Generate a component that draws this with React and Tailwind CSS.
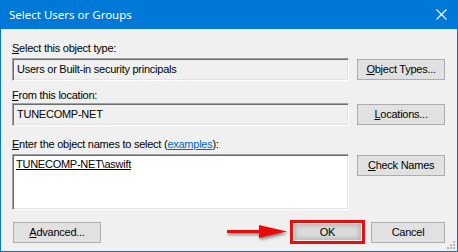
const Btn = ({ children, className = "" }) => (
    <div
        className={
            "h-[21px] flex items-center justify-center bg-[#e1e1e1] border border-[#adadad] text-black " +
            className
        }
    >
        {children}
    </div>
);

const Field = ({ children, className = "" }) => (
    <div
        className={
            "border border-t-[#a0a0a0] border-l-[#a0a0a0] border-r-white border-b-white shadow-[inset_1px_1px_0_#6d6d6d,inset_-1px_-1px_0_#e3e3e3] " +
            className
        }
    >
        {children}
    </div>
);

export default function App() {
    return (
        <div className="w-[458px] h-[252px] bg-[#0078d7] px-px pb-px flex flex-col font-['Liberation_Sans',Arial,sans-serif] text-[11px] leading-[13px] tracking-[-0.25px] text-black relative overflow-hidden">
            {/* title bar */}
            <div className="h-[29px] flex items-center justify-between pl-[8px] pr-[10px] text-white">
                <span className="font-['Noto_Sans',sans-serif] text-[11.5px] leading-[16px] tracking-normal">
                    Select Users or Groups
                </span>
                <svg width="11" height="11" viewBox="0 0 11 11">
                    <path d="M0.5 0.5L10.5 10.5M10.5 0.5L0.5 10.5" stroke="white" strokeWidth="1.1" />
                </svg>
            </div>

            {/* body */}
            <div className="flex-1 bg-[#f0f0f0] pl-[11px] pr-[12px] pt-[13px] flex flex-col relative">
                <div>
                    <u>S</u>elect this object type:
                </div>
                <div className="flex items-center gap-[8px] mt-[3px]">
                    <Field className="w-[338px] h-[23px] flex items-center pl-[4px] bg-[#f0f0f0]">
                        Users or Built-in security principals
                    </Field>
                    <Btn className="w-[88px]">
                        <span>
                            <u>O</u>bject Types...
                        </span>
                    </Btn>
                </div>

                <div className="mt-[8px]">
                    <u>F</u>rom this location:
                </div>
                <div className="flex items-center gap-[8px] mt-[1px]">
                    <Field className="w-[338px] h-[23px] flex items-center pl-[4px] bg-[#f0f0f0]">
                        TUNECOMP-NET
                    </Field>
                    <Btn className="w-[88px]">
                        <span>
                            <u>L</u>ocations...
                        </span>
                    </Btn>
                </div>

                <div className="mt-[12px]">
                    <u>E</u>nter the object names to select (
                    <span className="text-[#0066cc] underline">examples</span>):
                </div>
                <div className="flex items-start gap-[8px] mt-[3px]">
                    <Field className="w-[338px] h-[56px] bg-white pl-[3px] pt-[3px]">
                        <span className="underline">TUNECOMP-NET\aswift</span>
                    </Field>
                    <Btn className="w-[88px] mt-[1px]">
                        <span>
                            <u>C</u>heck Names
                        </span>
                    </Btn>
                </div>

                <div className="flex items-center mt-[10px]">
                    <Btn className="w-[88px] ml-[1px]">
                        <span>
                            <u>A</u>dvanced...
                        </span>
                    </Btn>
                    <div className="ml-auto flex items-center gap-[6px]">
                        <div className="w-[75px] h-[24px] border-[3px] border-[#e8100f] bg-[#f0f0f0] p-[1px]">
                            <div className="w-full h-full bg-[#dcdcdc] shadow-[inset_0_0_4px_2px_#b8b8b8] flex items-center justify-center">
                                OK
                            </div>
                        </div>
                        <Btn className="w-[74px]">Cancel</Btn>
                    </div>
                </div>

                {/* annotation arrow */}
                <svg
                    className="absolute left-[224px] top-[193px]"
                    width="66"
                    height="20"
                    viewBox="0 0 66 20"
                >
                    <defs>
                        <filter id="sh" x="-20%" y="-50%" width="140%" height="200%">
                            <feDropShadow dx="1" dy="2" stdDeviation="1.5" floodColor="#000" floodOpacity="0.45" />
                        </filter>
                    </defs>
                    <g filter="url(#sh)">
                        <rect x="2" y="8" width="34" height="3" fill="#e8100f" />
                        <path d="M34 3L62 9.5L34 16Z" fill="#e8100f" />
                    </g>
                </svg>

                {/* resize grip */}
                <svg className="absolute right-[2px] bottom-[2px]" width="9" height="9" viewBox="0 0 9 9">
                    <rect x="7" y="1" width="2" height="2" fill="#b8b8b8" />
                    <rect x="4" y="4" width="2" height="2" fill="#b8b8b8" />
                    <rect x="7" y="4" width="2" height="2" fill="#b8b8b8" />
                    <rect x="1" y="7" width="2" height="2" fill="#b8b8b8" />
                    <rect x="4" y="7" width="2" height="2" fill="#b8b8b8" />
                    <rect x="7" y="7" width="2" height="2" fill="#b8b8b8" />
                </svg>
            </div>
        </div>
    );
}
